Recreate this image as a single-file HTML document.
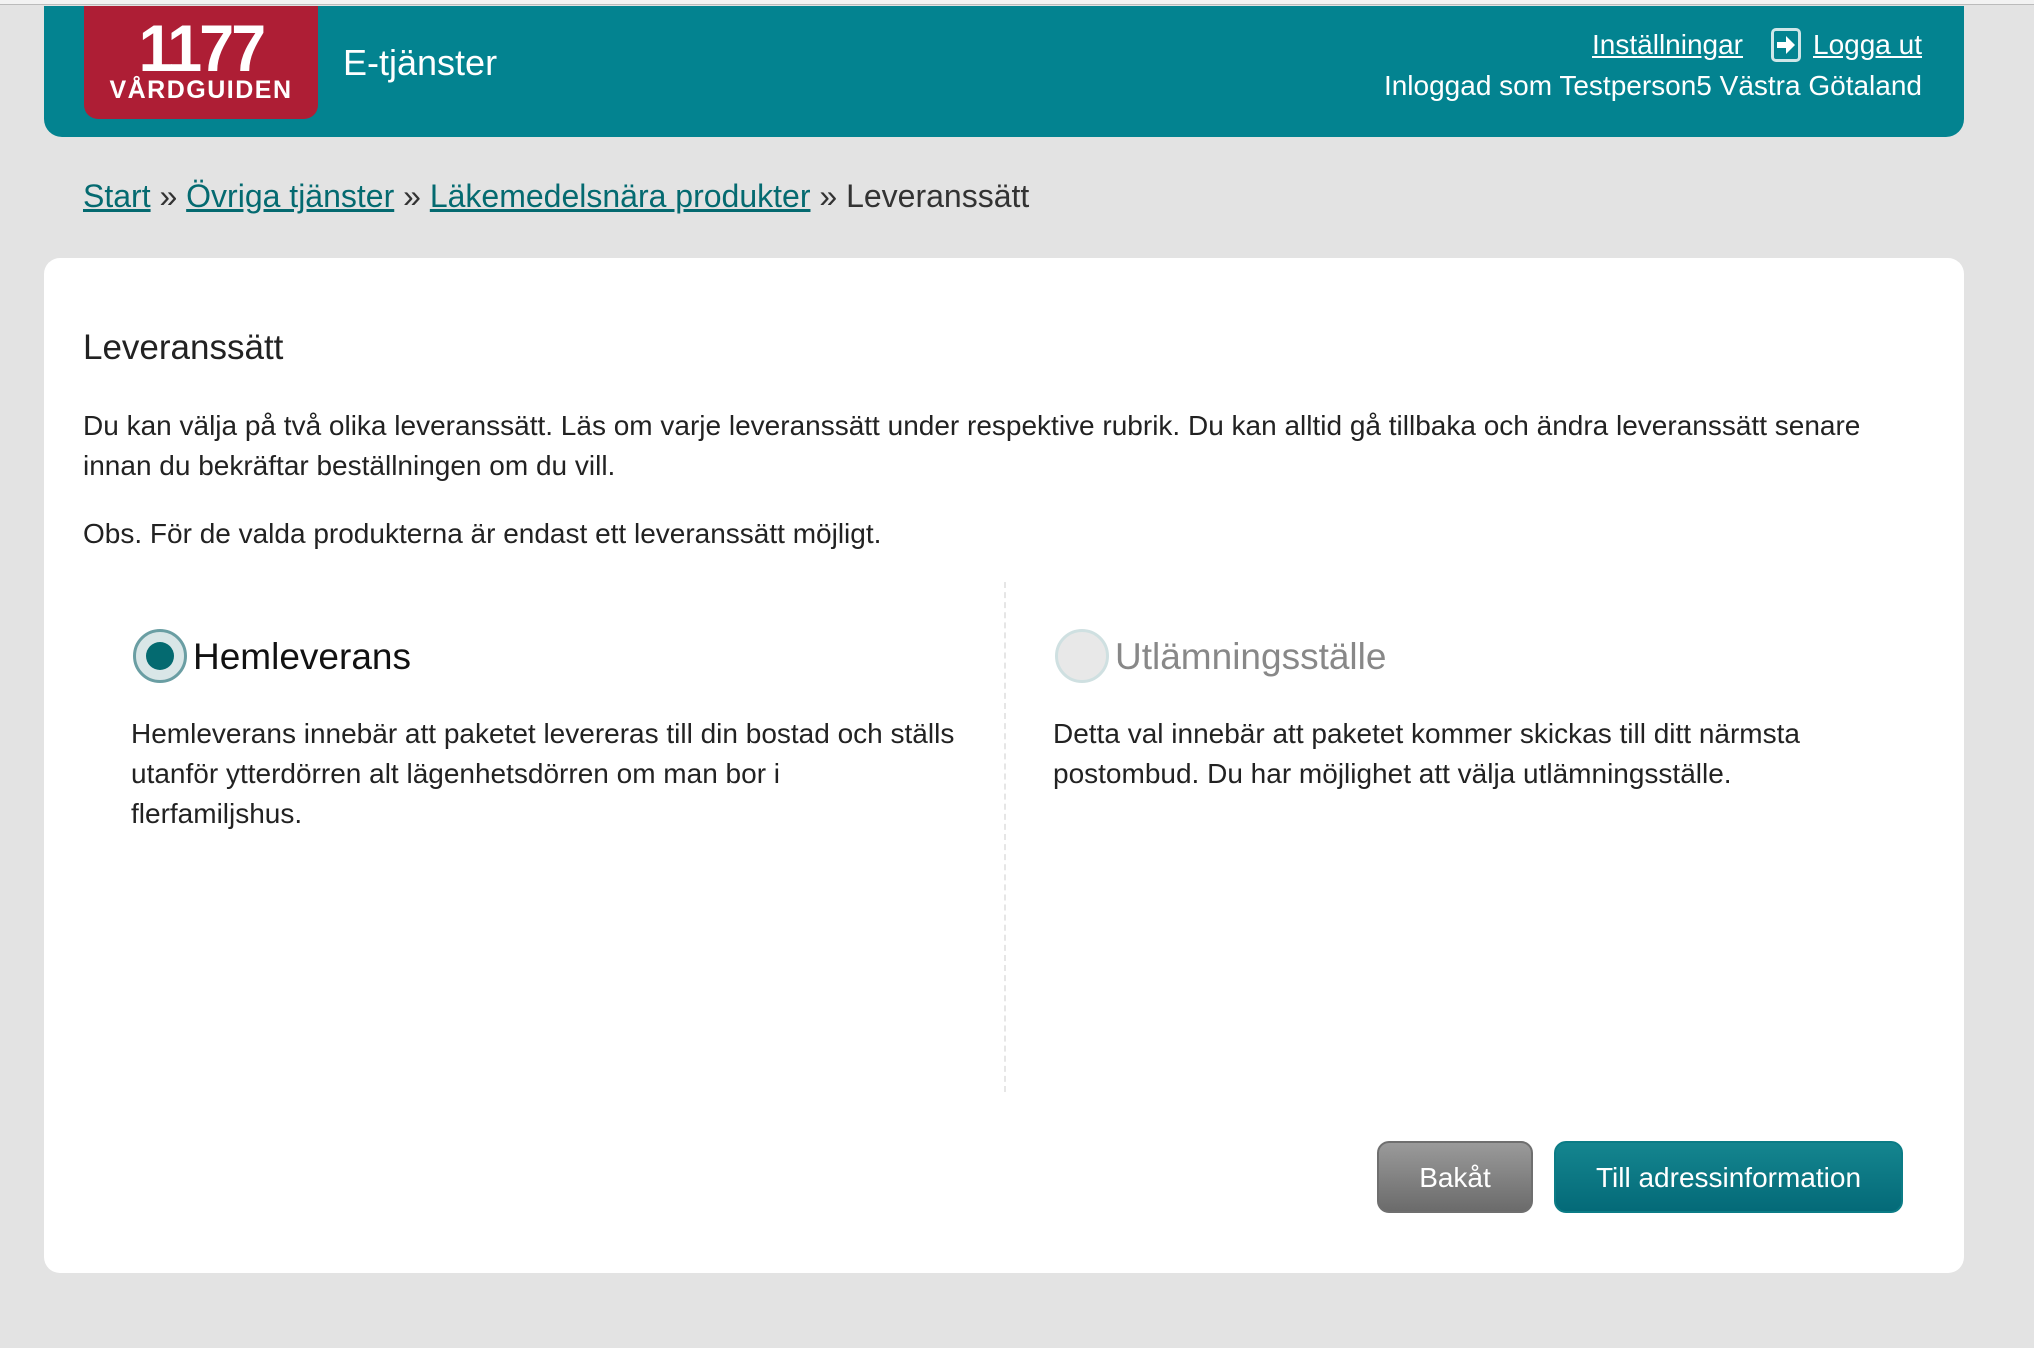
<!DOCTYPE html>
<html><head><meta charset="utf-8"><style>
*{margin:0;padding:0;box-sizing:border-box}
body{width:2034px;height:1348px;background:#e3e3e3;font-family:"Liberation Sans",Arial,sans-serif;position:relative;overflow:hidden;color:#222}
.top{position:absolute;left:0;top:0;width:2034px;height:5px;background:#f2f2f2;border-bottom:1px solid #bbb}
.hdr{position:absolute;left:44px;top:6px;width:1920px;height:131px;background:#038390;border-radius:0 0 18px 18px}
.logo{position:absolute;left:84px;top:6px;width:234px;height:113px;background:#ae1e35;border-radius:0 0 14px 14px;color:#fff;text-align:center}
.logo .n{font-size:66px;font-weight:bold;letter-spacing:-3px;line-height:60px;margin-top:12px;transform:scaleX(0.95)}
.logo .v{font-size:25px;font-weight:bold;letter-spacing:1.5px;line-height:28px;margin-top:-2px}
.et{position:absolute;left:343px;top:42px;font-size:36px;color:#fff}
.r1{position:absolute;right:112px;top:28px;font-size:28px;color:#fff;display:flex;align-items:center}
.r1 a{color:#fff;text-decoration:underline}
.ico{width:30px;height:34px;border:3px solid #cfe6e8;border-radius:5px;margin:0 12px 0 28px;position:relative;background:#038390}
.r2{position:absolute;right:112px;top:70px;font-size:28px;color:#fff}
.bc{position:absolute;left:83px;top:178px;font-size:32px;color:#333}
.bc a{color:#046a70;text-decoration:underline}
.card{position:absolute;left:44px;top:258px;width:1920px;height:1015px;background:#fff;border-radius:16px}
h1{position:absolute;left:83px;top:328px;font-size:35px;font-weight:normal;color:#222}
.p{position:absolute;left:83px;font-size:28px;line-height:40px;color:#222}
.div{position:absolute;left:1004px;top:582px;height:510px;border-left:2px dashed #e6e6e6}
.rad{position:absolute;width:54px;height:54px;border-radius:50%;top:629px}
.lbl{position:absolute;top:636px;font-size:37px}
.btn{position:absolute;top:1141px;height:72px;border-radius:12px;color:#fff;font-size:28px;text-align:center;line-height:70px}
</style></head><body>
<div class="top"></div>
<div class="hdr"></div>
<div class="logo"><div class="n">1177</div><div class="v">VÅRDGUIDEN</div></div>
<div class="et">E-tjänster</div>
<div class="r1"><a>Inställningar</a><span class="ico"><svg width="24" height="28" viewBox="0 0 24 28" style="position:absolute;left:0;top:0"><path d="M3 11h9V5l9 9-9 9v-6H3z" fill="#fff"/></svg></span><a>Logga ut</a></div>
<div class="r2">Inloggad som Testperson5 Västra Götaland</div>
<div class="bc"><a>Start</a> » <a>Övriga tjänster</a> » <a>Läkemedelsnära produkter</a> » Leveranssätt</div>
<div class="card"></div>
<h1>Leveranssätt</h1>
<div class="p" style="top:406px">Du kan välja på två olika leveranssätt. Läs om varje leveranssätt under respektive rubrik. Du kan alltid gå tillbaka och ändra leveranssätt senare<br>innan du bekräftar beställningen om du vill.</div>
<div class="p" style="top:514px">Obs. För de valda produkterna är endast ett leveranssätt möjligt.</div>
<div class="div"></div>
<div class="rad" style="left:133px;background:#d9e6e7;border:3px solid #6a9ea3"><div style="position:absolute;left:10px;top:10px;width:28px;height:28px;border-radius:50%;background:#046a70"></div></div>
<div class="lbl" style="left:193px;color:#111">Hemleverans</div>
<div class="p" style="left:131px;top:714px">Hemleverans innebär att paketet levereras till din bostad och ställs<br>utanför ytterdörren alt lägenhetsdörren om man bor i<br>flerfamiljshus.</div>
<div class="rad" style="left:1055px;background:#e8e8e8;border:3px solid #cfe0e1"></div>
<div class="lbl" style="left:1115px;color:#888">Utlämningsställe</div>
<div class="p" style="left:1053px;top:714px">Detta val innebär att paketet kommer skickas till ditt närmsta<br>postombud. Du har möjlighet att välja utlämningsställe.</div>
<div class="btn" style="left:1377px;width:156px;background:linear-gradient(#9a9a9a,#6b6b6b);border:2px solid #6f6f6f">Bakåt</div>
<div class="btn" style="left:1554px;width:349px;background:linear-gradient(#14858f,#046a78);border:2px solid #0b7c86">Till adressinformation</div>
</body></html>
